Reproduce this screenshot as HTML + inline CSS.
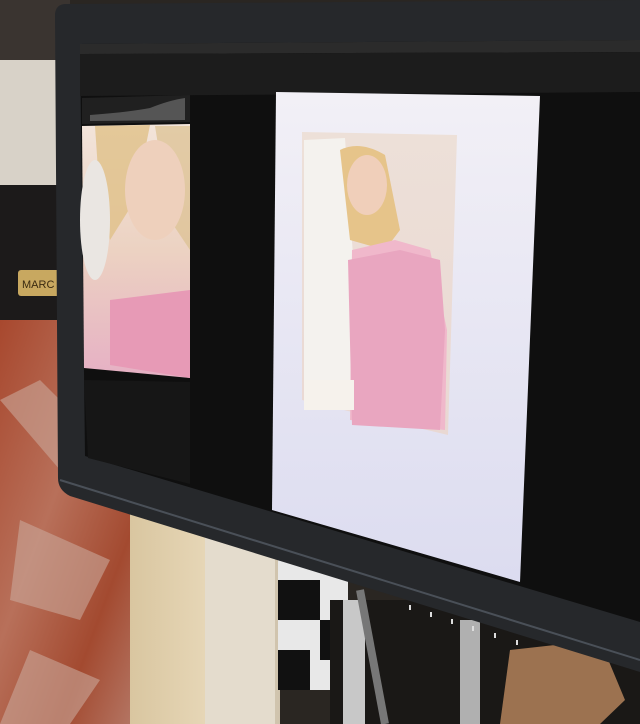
<!DOCTYPE html>
<html><head><meta charset="utf-8"><style>
html,body{margin:0;padding:0;width:640px;height:724px;overflow:hidden;background:#222}
svg{display:block}
text{font-family:"Liberation Sans",sans-serif}
</style></head><body>
<svg width="640" height="724" viewBox="0 0 640 724" xmlns="http://www.w3.org/2000/svg">
<defs>
<linearGradient id="marble" x1="0" y1="0" x2="1" y2="1">
<stop offset="0" stop-color="#a8482e"/><stop offset="0.4" stop-color="#b8705a"/><stop offset="0.7" stop-color="#a34a30"/><stop offset="1" stop-color="#b88070"/></linearGradient>
<linearGradient id="col" x1="0" y1="0" x2="1" y2="0">
<stop offset="0" stop-color="#d9c6a0"/><stop offset="0.5" stop-color="#e6d6b6"/><stop offset="1" stop-color="#cfc3ad"/></linearGradient>
<linearGradient id="ph1" x1="0" y1="0" x2="0" y2="1">
<stop offset="0" stop-color="#f2e4da"/><stop offset="0.5" stop-color="#ecd2c2"/><stop offset="1" stop-color="#e6b0c4"/></linearGradient>
<linearGradient id="ph2" x1="0" y1="0" x2="0" y2="1">
<stop offset="0" stop-color="#ede0d8"/><stop offset="1" stop-color="#e9d8d3"/></linearGradient>
<linearGradient id="page" x1="0" y1="0" x2="0" y2="1">
<stop offset="0" stop-color="#f2f0f6"/><stop offset="1" stop-color="#dcdcf0"/></linearGradient>
</defs>
<rect x="0" y="0" width="640" height="724" fill="#2a2622"/>
<rect x="0" y="0" width="70" height="320" fill="#d8d2c8"/>
<rect x="0" y="0" width="70" height="60" fill="#3a3430"/>
<rect x="0" y="185" width="70" height="135" fill="#1c1a1a"/>
<rect x="18" y="270" width="45" height="26" rx="3" fill="#c8a860"/>
<text x="22" y="288" font-size="11" fill="#3a2a10">MARC</text>
<rect x="0" y="320" width="150" height="404" fill="url(#marble)"/>
<path d="M0 400 L40 380 L90 430 L60 470 Z M20 520 L110 560 L80 620 L10 600 Z M30 650 L100 680 L70 724 L0 724 Z" fill="#c9a79a" opacity="0.6"/>
<rect x="130" y="500" width="150" height="224" fill="url(#col)"/>
<rect x="205" y="520" width="70" height="204" fill="#e4dccd"/>
<rect x="278" y="540" width="70" height="150" fill="#e8e8e8"/>
<path d="M278 580 L320 580 L320 620 L278 620 Z M320 620 L350 620 L350 660 L320 660 Z M278 650 L310 650 L310 690 L278 690 Z" fill="#111"/>
<rect x="330" y="600" width="310" height="124" fill="#1a1816"/>
<path d="M510 650 L600 640 L625 700 L600 724 L500 724 Z" fill="#9c7250"/>
<rect x="343" y="600" width="22" height="124" fill="#c8c8c8"/>
<rect x="460" y="620" width="20" height="104" fill="#b0b0b0"/>
<path d="M360 590 L385 724" stroke="#777" stroke-width="8" fill="none"/>
<path d="M55 14 Q56 4 66 4 L640 0 L640 672 L70 496 Q58 490 58 478 Z" fill="#26282b"/>
<path d="M60 480 L640 660" stroke="#4a5058" stroke-width="2"/>
<path d="M80 44 L640 40 L640 622 L85 456 Z" fill="#0f0f0f"/>
<path d="M80 44 L640 40 L640 52 L80 54 Z" fill="#2b2b2b"/>
<path d="M80 54 L640 52 L640 92 L80 96 Z" fill="#1c1c1c"/>
<path d="M82 98 L190 95 L190 122 L82 124 Z" fill="#202020"/>
<path d="M90 115 Q130 112 150 108 Q170 100 185 98 L185 120 L90 121 Z" fill="#555"/>
<path d="M82 126 L190 124 L190 378 L84 368 Z" fill="url(#ph1)"/>
<path d="M95 126 L150 125 L135 200 L110 240 L100 200 Z" fill="#e0c088" opacity="0.8"/>
<path d="M155 126 L190 126 L190 250 L170 220 Z" fill="#dcc090" opacity="0.7"/>
<ellipse cx="155" cy="190" rx="30" ry="50" fill="#eed0bc"/>
<path d="M110 300 L190 290 L190 378 L110 365 Z" fill="#e79ab6"/>
<ellipse cx="95" cy="220" rx="15" ry="60" fill="#eae6e2"/>
<path d="M84 380 L190 382 L190 484 L88 458 Z" fill="#161616"/>
<path d="M276 92 L540 96 L520 582 L272 510 Z" fill="url(#page)"/>
<path d="M302 132 L457 135 L448 435 L302 400 Z" fill="url(#ph2)"/>
<path d="M304 140 L345 138 L356 300 L356 380 L304 380 Z" fill="#f4f2ee"/>
<path d="M340 150 Q360 140 385 155 L400 230 L385 250 L350 240 Z" fill="#e6c48a"/>
<ellipse cx="367" cy="185" rx="20" ry="30" fill="#f0cfba"/>
<path d="M352 250 L395 240 L430 250 L447 330 L445 430 L350 420 Z" fill="#f0b8cb"/>
<path d="M348 260 L400 250 L440 260 L445 330 L440 430 L352 425 Z" fill="#e9a6c0"/>
<rect x="304" y="380" width="50" height="30" fill="#f6f2ec"/>
<g fill="#ddd"><rect x="409" y="605" width="2" height="5"/><rect x="430" y="612" width="2" height="5"/><rect x="451" y="619" width="2" height="5"/><rect x="472" y="626" width="2" height="5"/><rect x="494" y="633" width="2" height="5"/><rect x="516" y="640" width="2" height="5"/></g>
</svg>
</body></html>
